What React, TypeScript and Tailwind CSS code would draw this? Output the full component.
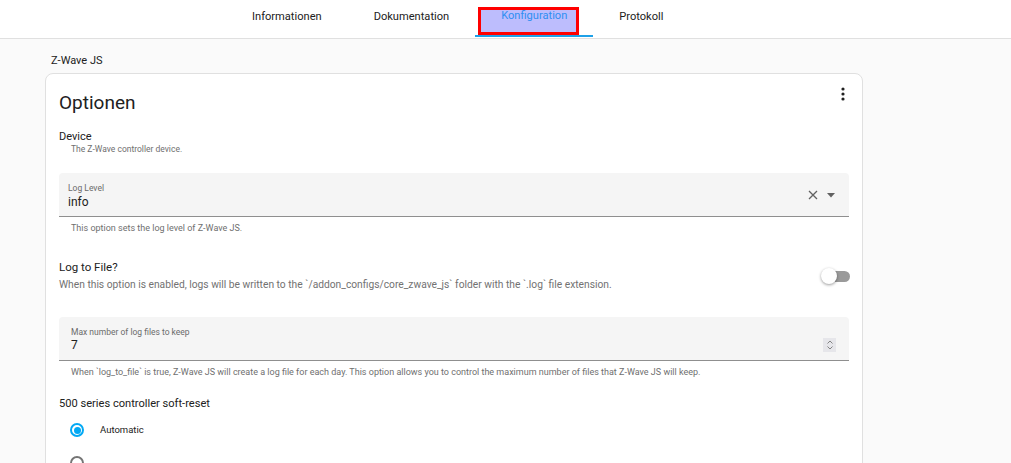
import React from "react";

const font = { fontFamily: "Roboto, 'Noto Sans', sans-serif" };

function Tab({ label, active }: { label: string; active?: boolean }) {
  return (
    <div className="relative h-[38px] px-[26px] flex justify-center">
      {active && (
        <div className="absolute left-[3px] top-[7px] w-[101px] h-[28px] border-[3px] border-[#ff0000] bg-[#bdbdfd]" />
      )}
      <span
        className={
          "relative text-[11.1px] leading-[14px] whitespace-nowrap " +
          (active ? "pt-[9px] text-[#2e8ff2]" : "pt-[10px] text-[#212121]")
        }
      >
        {label}
      </span>
      {active && <div className="absolute left-0 right-0 bottom-[1px] h-[2px] bg-[#1ea1e8]" />}
    </div>
  );
}

function Radio({ checked }: { checked?: boolean }) {
  return (
    <div
      className={
        "w-[14px] h-[14px] rounded-full border-2 flex items-center justify-center " +
        (checked ? "border-[#03a9f4]" : "border-[#757575]")
      }
    >
      {checked && <div className="w-[7px] h-[7px] rounded-full bg-[#03a9f4]" />}
    </div>
  );
}

export default function App() {
  return (
    <div className="w-[1011px] h-[463px] overflow-hidden bg-[#fafafa]" style={font}>
      <div className="h-[39px] bg-white border-b border-[#e0e0e0] flex pl-[226px]">
        <Tab label="Informationen" />
        <Tab label="Dokumentation" />
        <Tab label="Konfiguration" active />
        <Tab label="Protokoll" />
      </div>

      <div className="pl-[51px] mt-[14px] text-[11px] leading-[16px] text-[#212121]">Z-Wave JS</div>

      <div className="relative ml-[45px] mt-[4px] w-[818px] rounded-[8px] border border-[#e0e0e0] bg-white px-[13px] pb-[20px]">
        <div className="absolute right-[17px] top-[13px]">
          <svg width="4" height="14" viewBox="0 0 4 14">
            <circle cx="2" cy="2" r="1.6" fill="#212121" />
            <circle cx="2" cy="7" r="1.6" fill="#212121" />
            <circle cx="2" cy="12" r="1.6" fill="#212121" />
          </svg>
        </div>

        <div className="pt-[17px] text-[19px] leading-[24px] text-[#212121]">Optionen</div>

        <div className="mt-[15px] text-[11px] leading-[14px] text-[#212121]">Device</div>
        <div className="pl-[12px] text-[8.5px] leading-[10px] text-[#6f6f6f]">The Z-Wave controller device.</div>

        <div className="mt-[19px] h-[44px] bg-[#f5f5f5] rounded-t-[4px] border-b border-[#8f8f8f] flex items-start pl-[9px] pr-[14px]">
          <div className="flex-1">
            <div className="pt-[10px] text-[8.5px] leading-[10px] text-[#6b6b6b]">Log Level</div>
            <div className="mt-[2px] text-[12px] leading-[14px] text-[#212121]">info</div>
          </div>
          <div className="flex items-center gap-[9px] mt-[17px]">
            <svg width="10" height="10" viewBox="0 0 10 10">
              <path d="M1 1 L9 9 M9 1 L1 9" stroke="#616161" strokeWidth="1.3" />
            </svg>
            <svg width="8" height="5" viewBox="0 0 8 5">
              <path d="M0 0 L8 0 L4 4.5 Z" fill="#616161" />
            </svg>
          </div>
        </div>
        <div className="mt-[6px] pl-[12px] text-[9px] leading-[10px] text-[#6f6f6f]">
          This option sets the log level of Z-Wave JS.
        </div>

        <div className="mt-[27px] flex items-center justify-between">
          <div>
            <div className="text-[11.5px] leading-[14px] text-[#212121]">Log to File?</div>
            <div className="mt-[5px] text-[10.25px] leading-[12px] text-[#727272]">
              When this option is enabled, logs will be written to the `/addon_configs/core_zwave_js` folder with the `.log` file extension.
            </div>
          </div>
          <div className="relative w-[30px] h-[16px] mr-[-1px] mt-[1px] flex items-center">
            <div className="absolute right-0 w-[21px] h-[11px] rounded-full bg-[#9a9a9a]" />
            <div className="absolute left-[1px] w-[16px] h-[16px] rounded-full bg-white shadow-[0_1px_3px_rgba(0,0,0,0.4)]" />
          </div>
        </div>

        <div className="mt-[26px] h-[44px] bg-[#f5f5f5] rounded-t-[4px] border-b border-[#8f8f8f] flex items-start pl-[12px] pr-[13px]">
          <div className="flex-1">
            <div className="pt-[10px] text-[8.5px] leading-[10px] text-[#6b6b6b]">Max number of log files to keep</div>
            <div className="mt-[1px] text-[12px] leading-[14px] text-[#212121]">7</div>
          </div>
          <div className="mt-[21px] w-[13px] h-[14px] bg-[#e6e6ea] flex flex-col items-center justify-center gap-[2px]">
            <svg width="6" height="4" viewBox="0 0 6 4">
              <path d="M0.5 3.5 L3 1 L5.5 3.5" stroke="#777" strokeWidth="0.9" fill="none" />
            </svg>
            <svg width="6" height="4" viewBox="0 0 6 4">
              <path d="M0.5 0.5 L3 3 L5.5 0.5" stroke="#777" strokeWidth="0.9" fill="none" />
            </svg>
          </div>
        </div>
        <div className="mt-[6px] pl-[12px] text-[9px] leading-[10px] text-[#6f6f6f]">
          When `log_to_file` is true, Z-Wave JS will create a log file for each day. This option allows you to control the maximum number of files that Z-Wave JS will keep.
        </div>

        <div className="mt-[20px] text-[11.1px] leading-[14px] text-[#212121]">500 series controller soft-reset</div>

        <div className="mt-[9px] h-[20px] flex items-center pl-[11px]">
          <Radio checked />
          <span className="ml-[16px] text-[9.5px] text-[#212121]">Automatic</span>
        </div>
        <div className="mt-[13px] h-[20px] flex items-center pl-[11px]">
          <Radio />
        </div>
      </div>
    </div>
  );
}
